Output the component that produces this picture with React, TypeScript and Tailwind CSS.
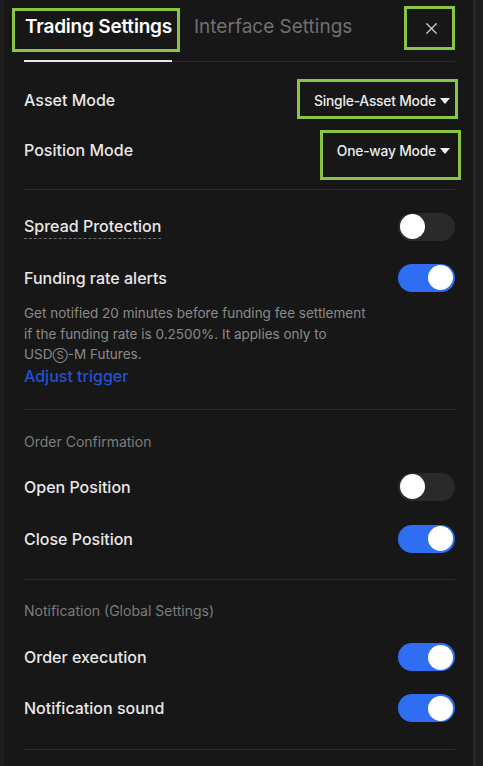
import { X } from 'lucide-react'

function Toggle({ on }: { on: boolean }) {
  return (
    <div
      className={
        on
          ? 'w-[57px] h-[28px] rounded-full bg-[#2f6df2] flex items-center justify-end px-[2px]'
          : 'w-[57px] h-[28px] rounded-full bg-[#2a2a2a] flex items-center justify-start px-[2px]'
      }
    >
      <div className="w-[25px] h-[25px] rounded-full bg-white" />
    </div>
  )
}

function Row({ label, on, h = 'h-[51px]', dotted = false }: { label: string; on: boolean; h?: string; dotted?: boolean }) {
  return (
    <div className={`${h} flex items-center justify-between`}>
      <span
        className={
          dotted
            ? 'text-[16px] font-medium text-[#e8e8e8] border-b border-dashed border-[#6a6a6a] leading-[23px]'
            : 'text-[16px] font-medium text-[#e8e8e8]'
        }
      >
        {label}
      </span>
      <Toggle on={on} />
    </div>
  )
}

function Select({ label }: { label: string }) {
  return (
    <div className="flex items-center gap-[4px] text-[13.8px] font-medium tracking-[-0.2px] text-[#ececec] pr-[5px] pt-[2px]">
      {label}
      <svg width="10" height="6" viewBox="0 0 10 6">
        <path d="M0 0h10L5 6z" fill="#f0f0f0" />
      </svg>
    </div>
  )
}

function Mark({ cls }: { cls: string }) {
  return <div className={`absolute border-[3px] border-[#89c442] ${cls}`} />
}

export default function App() {
  return (
    <div
      className="relative w-[483px] h-[766px] bg-[#1d1d1d] flex overflow-hidden"
      style={{ fontFamily: 'Inter, "Noto Sans", sans-serif' }}
    >
      <div className="w-[4px]" />
      <div className="w-[469px] bg-[#171717] pl-[20px] pr-[18px]">
        {/* tabs */}
        <div className="h-[62px] flex items-end border-b border-[#2a2a2a]">
          <div className="flex-1 flex items-end h-full">
            <div className="h-full flex flex-col justify-between">
              <span className="pt-[15px] text-[19px] font-semibold text-white leading-[24px] pl-[1px] tracking-[-0.2px]">
                Trading Settings
              </span>
              <div className="h-[2px] bg-[#e6e6e6] -mb-px w-[148px]" />
            </div>
            <span className="self-start pt-[15px] ml-[22px] text-[19px] text-[#707070] leading-[24px]">
              Interface Settings
            </span>
          </div>
          <div className="self-start pt-[19px] pr-[14px]">
            <X size={19} strokeWidth={1.5} color="#d0d0d0" />
          </div>
        </div>

        <div className="pt-[13px]">
          <div className="h-[50px] flex items-center justify-between">
            <span className="text-[16px] font-medium text-[#e8e8e8]">Asset Mode</span>
            <Select label="Single-Asset Mode" />
          </div>
          <div className="h-[50px] flex items-center justify-between">
            <span className="text-[16px] font-medium text-[#e8e8e8]">Position Mode</span>
            <Select label="One-way Mode" />
          </div>
        </div>
        <div className="mt-[14px] h-px bg-[#2c2c2c]" />

        <div className="pt-[11px]">
          <Row label="Spread Protection" on={false} dotted />
          <Row label="Funding rate alerts" on />
          <p className="text-[13.5px] leading-[20.5px] text-[#8a8a8a]">
            Get notified 20 minutes before funding fee settlement
            <br />
            if the funding rate is 0.2500%. It applies only to
            <br />
            USD<span className="text-[11px]">Ⓢ</span>-M Futures.
          </p>
          <div className="text-[16px] font-medium text-[#2251d6] leading-[20px]">Adjust trigger</div>
        </div>
        <div className="mt-[23px] h-px bg-[#2c2c2c]" />

        <div className="pt-[22px]">
          <div className="text-[14px] leading-[20px] text-[#7c7c7c]">Order Confirmation</div>
          <div className="pt-[9px]">
            <Row label="Open Position" on={false} h="h-[52px]" />
            <Row label="Close Position" on h="h-[52px]" />
          </div>
        </div>
        <div className="mt-[14px] h-px bg-[#2c2c2c]" />

        <div className="pt-[21px]">
          <div className="text-[14px] leading-[20px] text-[#7c7c7c]">Notification (Global Settings)</div>
          <div className="pt-[11px]">
            <Row label="Order execution" on />
            <Row label="Notification sound" on />
          </div>
        </div>
        <div className="mt-[15px] h-px bg-[#2c2c2c]" />
      </div>
      <div className="w-[3px] bg-[#262626]" />

      <Mark cls="left-[12px] top-[8px] w-[168px] h-[44px]" />
      <Mark cls="left-[404px] top-[6px] w-[51px] h-[44px]" />
      <Mark cls="left-[297px] top-[79px] w-[161px] h-[40px]" />
      <Mark cls="left-[320px] top-[130px] w-[141px] h-[50px]" />
    </div>
  )
}
